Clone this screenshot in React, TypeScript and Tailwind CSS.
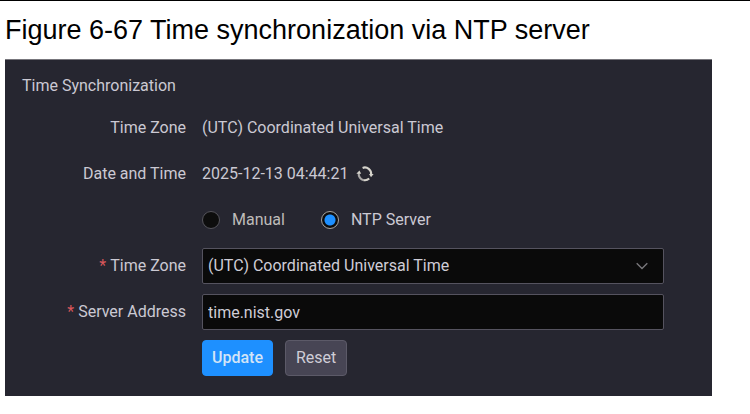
import { useState } from "react";
import type { ReactNode } from "react";

interface FormRowProps {
  label?: string;
  htmlFor?: string;
  required?: boolean;
  children: ReactNode;
}

function FormRow({ label, htmlFor, required, children }: FormRowProps) {
  const text = (
    <>
      {required && <span className="mr-1 text-[#d9575b]">*</span>}
      {label}
    </>
  );

  return (
    <div className="flex min-h-9 items-center gap-4">
      <div className="w-[164px] shrink-0 text-right">
        {htmlFor ? <label htmlFor={htmlFor}>{text}</label> : text}
      </div>
      <div className="flex min-w-0 flex-1 items-center">{children}</div>
    </div>
  );
}

function RefreshIcon() {
  return (
    <svg width="18" height="18" viewBox="0 0 18 18" fill="none">
      <path d="M6.6 2.9A6.3 6.3 0 0 1 15.1 9.6" stroke="#d6d4cc" strokeWidth="2.1" />
      <path d="M13 9h4.6l-2.6 3.2z" fill="#d6d4cc" />
      <path d="M13.2 13.6A6.3 6.3 0 0 1 7.4 15.1" stroke="#d6d4cc" strokeWidth="2.1" />
      <path d="M7.8 15.2A6.3 6.3 0 0 1 2.8 8" stroke="#a9a7a6" strokeWidth="2.1" />
      <path d="M0.4 8.8h4.8L3.4 5.4z" fill="#d6d4cc" />
    </svg>
  );
}

const radioClass =
  "h-[18px] w-[18px] shrink-0 appearance-none rounded-full border border-[#55545b] bg-[#0d0d0d] checked:border-[#aaa69f] checked:bg-[radial-gradient(circle,#1e90ff_0_5px,#0d0d0d_6px)]";

const fieldClass =
  "h-9 w-full rounded-xs border border-[#55535f] bg-[#0a0a0a] px-[5px] text-[#cfcdd7] outline-none";

export default function App() {
  const [mode, setMode] = useState("ntp");
  const [server, setServer] = useState("time.nist.gov");

  return (
    <main className="border-t border-black bg-white pb-4 font-['Liberation_Sans',Arial,sans-serif]">
      <h1 className="px-[5px] pt-[9px] text-[27px] leading-10 text-black">
        Figure 6-67 Time synchronization via NTP server
      </h1>

      <form
        onSubmit={(e) => e.preventDefault()}
        className="mt-[9px] mr-[38px] ml-[5px] border-t border-[#77767c] bg-[#262630] pr-12 pb-5 pl-[17px] font-[Roboto,Arial,sans-serif] text-[16px] leading-5 text-[#cbc9d3]"
      >
        <h2 className="pt-4">Time Synchronization</h2>

        <div className="mt-[14px] flex flex-col gap-[10px]">
          <FormRow label="Time Zone">(UTC) Coordinated Universal Time</FormRow>
          <FormRow label="Date and Time">
            2025-12-13 04:44:21
            <button type="button" aria-label="Refresh" className="ml-2">
              <RefreshIcon />
            </button>
          </FormRow>
          <FormRow>
            <label className="flex items-center gap-3 text-[#bebcb9]">
              <input
                type="radio"
                name="mode"
                checked={mode === "manual"}
                onChange={() => setMode("manual")}
                className={radioClass}
              />
              Manual
            </label>
            <label className="ml-9 flex items-center gap-3">
              <input
                type="radio"
                name="mode"
                checked={mode === "ntp"}
                onChange={() => setMode("ntp")}
                className={radioClass}
              />
              NTP Server
            </label>
          </FormRow>
          <FormRow label="Time Zone" htmlFor="timezone" required>
            <div className="relative w-full">
              <select id="timezone" className={`${fieldClass} appearance-none`}>
                <option>(UTC) Coordinated Universal Time</option>
              </select>
              <svg
                className="pointer-events-none absolute top-3 right-4"
                width="12"
                height="12"
                viewBox="0 0 12 12"
                fill="none"
              >
                <path d="M0.7 3.2L6 8.6L11.3 3.2" stroke="#77767a" strokeWidth="1.4" />
              </svg>
            </div>
          </FormRow>
          <FormRow label="Server Address" htmlFor="server" required>
            <input
              id="server"
              type="text"
              value={server}
              onChange={(e) => setServer(e.target.value)}
              className={fieldClass}
            />
          </FormRow>
          <FormRow>
            <button
              type="submit"
              className="h-9 rounded border border-[#1e90ff] bg-[#1e90ff] px-[9px] font-medium text-[#d3e4f7]"
            >
              Update
            </button>
            <button
              type="reset"
              className="ml-3 h-9 rounded border border-[#5c5a68] bg-[#474554] px-[10px] text-[#cfcdd7]"
            >
              Reset
            </button>
          </FormRow>
        </div>
      </form>
    </main>
  );
}
